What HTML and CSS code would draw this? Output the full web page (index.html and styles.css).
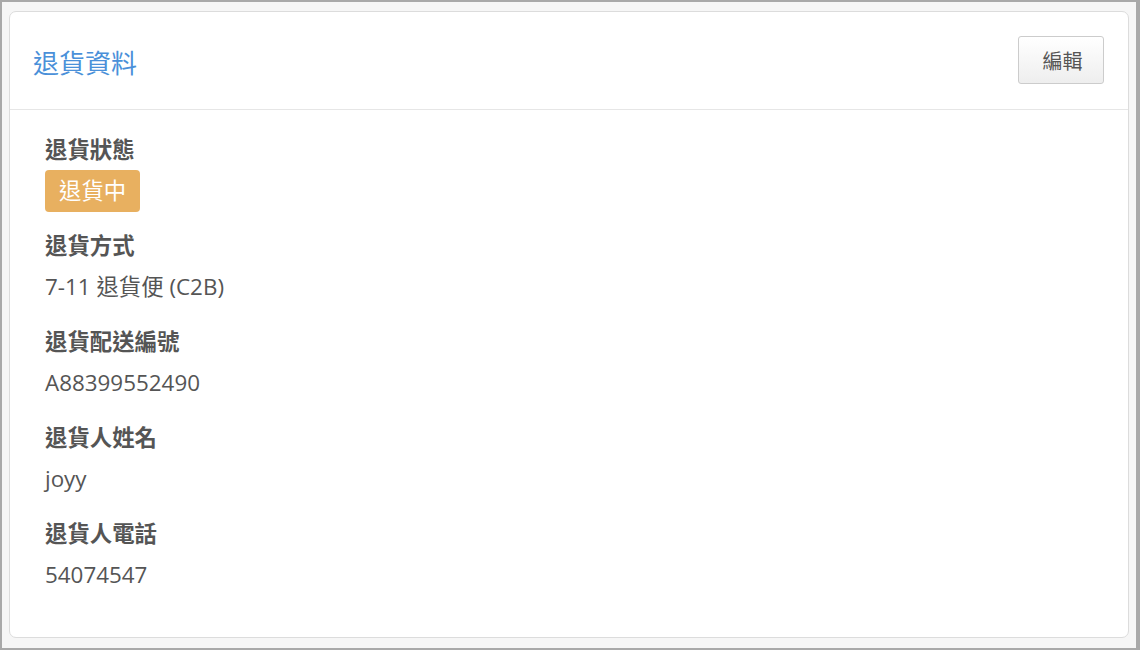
FILE: index.html
```html
<!DOCTYPE html>
<html lang="zh-Hant">
<head>
<meta charset="utf-8">
<title>退貨資料</title>
<link rel="stylesheet" href="styles.css">
</head>
<body>
<div class="frame">
  <section class="card">
    <header class="card-header">
      <h2 class="card-title">退貨資料</h2>
      <button class="btn" type="button">編輯</button>
    </header>
    <div class="card-body">
      <div class="field">
        <div class="field-label">退貨狀態</div>
        <div class="field-value"><span class="badge">退貨中</span></div>
      </div>
      <div class="field">
        <div class="field-label">退貨方式</div>
        <div class="field-value">7-11 退貨便 (C2B)</div>
      </div>
      <div class="field">
        <div class="field-label">退貨配送編號</div>
        <div class="field-value">A88399552490</div>
      </div>
      <div class="field">
        <div class="field-label">退貨人姓名</div>
        <div class="field-value">joyy</div>
      </div>
      <div class="field">
        <div class="field-label">退貨人電話</div>
        <div class="field-value">54074547</div>
      </div>
    </div>
  </section>
</div>
</body>
</html>
```
FILE: styles.css
```css
html, body {
  margin: 0;
  padding: 0;
  height: 100%;
}
body {
  background: #a9a9a9;
  font-family: "Open Sans", "Noto Sans CJK TC", sans-serif;
  color: #555;
  padding: 2px 4px 2px 2px;
  box-sizing: border-box;
}
.frame {
  background: #f6f6f6;
  height: 100%;
  box-sizing: border-box;
  padding: 9px 7px 10px 7px;
}
.card {
  background: #fff;
  border: 1px solid #dcdcdc;
  border-radius: 7px;
  height: 100%;
  box-sizing: border-box;
}
.card-header {
  display: flex;
  align-items: center;
  justify-content: space-between;
  padding: 24px 24px 25px 23px;
  border-bottom: 1px solid #e6e6e6;
}
.card-title {
  margin: 0;
  font-size: 26px;
  font-weight: normal;
  color: #4a90d9;
  line-height: 32px;
  padding-top: 6px;
}
.btn {
  width: 86px;
  height: 48px;
  font-family: "Open Sans", "Noto Sans CJK TC", sans-serif;
  font-size: 20px;
  color: #555;
  background: linear-gradient(#ffffff, #eeeeee);
  border: 1px solid #cccccc;
  border-radius: 3px;
  padding: 0 0 0 3px;
}
.card-body {
  padding: 24px 35px;
}
.field {
  margin-bottom: 18px;
}
.field-label {
  font-size: 22.4px;
  font-weight: bold;
  line-height: 32px;
  margin-bottom: 4px;
  color: #555;
}
.field-value {
  font-size: 22.4px;
  line-height: 42px;
  height: 42px;
  color: #555;
}
.badge {
  display: inline-block;
  background: #e8b060;
  color: #fff;
  padding: 0 14px;
  border-radius: 4px;
  line-height: 42px;
}
```
